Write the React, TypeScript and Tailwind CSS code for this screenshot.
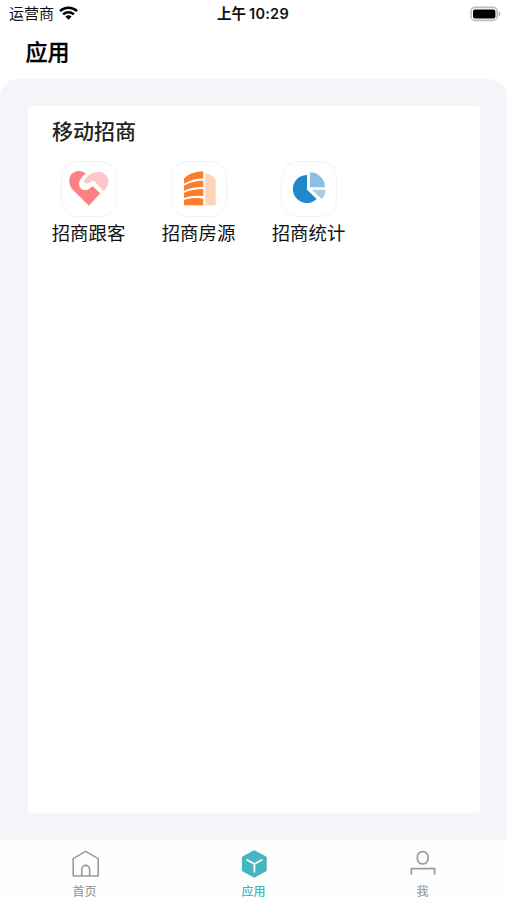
import React from 'react';

const FollowIcon = () => (
  <svg viewBox="63 153 168 168" className="size-14">
    <path d="M88 213C87 196 100 183 117 183C125 183 132 186 137 191C125 200 117 211 117 221C118 234 128 242 139 240C147 239 151 233 158 229L181 250L147 287L99 240C92 233 88 224 88 213Z" fill="#fb8184" />
    <path d="M132 214C139 199 151 189 169 186C189 183 206 197 205 216C205 227 199 236 191 244L163 213C155 211 150 218 143 220C136 222 130 219 132 214Z" fill="#fdc7ca" />
  </svg>
);

const HouseIcon = () => (
  <svg viewBox="63 33 168 168" className="size-14">
    <path d="M166 69C181 73 195 82 197 92V166H166Z" fill="#fed3b8" />
    <g fill="#fb7d2b">
      <path d="M102 101V86C114 73 136 64 160 64V85C138 86 119 91 102 101Z" />
      <path d="M102 122V107C118 97 139 92 160 92V111C139 111 120 114 102 122Z" />
      <path d="M102 144V128C120 120 140 117 160 117V138C140 136 121 138 102 144Z" />
      <path d="M102 166V150C121 144 141 143 160 146V166Z" />
    </g>
  </svg>
);

const StatsIcon = () => (
  <svg viewBox="63 33 168 168" className="size-14">
    <path d="M141 75V119L170 147A42 42 0 1 1 141 75Z" fill="#1e88ca" />
    <path d="M150 67A45 45 0 0 1 195 112H150Z" fill="#8cc0e3" />
    <path d="M155 119H197C197 130 192 140 185 147Z" fill="#a5d0ec" />
  </svg>
);

const HomeIcon = () => (
  <svg viewBox="0 0 28 28" className="size-7" fill="none" stroke="#9b9b9b" strokeWidth="1.6" strokeLinejoin="round">
    <path d="M2.2 8.6L14.7 1.4L27.2 8.6V26H2.2Z" />
    <path d="M10.8 26V19.3A3.9 3.9 0 0 1 18.6 19.3V26" />
  </svg>
);

const AppIcon = () => (
  <svg viewBox="0 0 28 28" className="size-7">
    <path d="M14.2 .7L26.2 7V20.8L14.2 27.2L2.4 20.8V7Z" fill="#45b6bf" stroke="#45b6bf" strokeLinejoin="round" />
    <path d="M7.2 10L14.4 14L21.6 10M14.4 14V21.8" fill="none" stroke="#fff" strokeWidth="1.8" strokeLinecap="round" />
  </svg>
);

const UserIcon = () => (
  <svg viewBox="0 0 28 28" className="size-7" fill="none" stroke="#9b9b9b" strokeWidth="1.7">
    <rect x="8.4" y="1.6" width="10.6" height="12.2" rx="5" />
    <path d="M2.3 24.8V18.6H25.6V24.8" strokeLinejoin="round" />
  </svg>
);

const entries = [
  { label: '招商跟客', icon: FollowIcon },
  { label: '招商房源', icon: HouseIcon },
  { label: '招商统计', icon: StatsIcon },
];

const tabs = [
  { label: '首页', icon: HomeIcon, active: false },
  { label: '应用', icon: AppIcon, active: true },
  { label: '我', icon: UserIcon, active: false },
];

const StatusBar = () => (
  <div className="h-7 grid grid-cols-3 items-center pl-[9px] pr-1.5 text-[#111]">
    <div className="flex items-center gap-[5px]">
      <span className="text-[15px] leading-7">运营商</span>
      <svg viewBox="0 0 19 14" className="w-[19px] h-3.5 mb-0.5" fill="none" stroke="#000" strokeWidth="2.6">
        <path d="M1 5.1C5.8.7 13.2.7 18 5.1" />
        <path d="M4.1 8.4C7.2 5.6 11.8 5.6 14.9 8.4" />
        <path d="M6.4 10.5C8.2 8.9 10.8 8.9 12.6 10.5L9.5 13.7Z" fill="#000" stroke="none" />
      </svg>
    </div>
    <div className="flex justify-center gap-[3px] -ml-1 text-[14.5px] leading-7 font-semibold whitespace-nowrap">
      <span>上午</span>
      <span className="tracking-[0.25px]">10:29</span>
    </div>
    <svg viewBox="0 0 31 16" className="w-[31px] h-4 mb-px justify-self-end">
      <rect x="1.1" y="1.4" width="26" height="13" rx="4" fill="#fff" stroke="#bdbdbd" strokeWidth="1.6" />
      <rect x="3" y="3.4" width="22.4" height="9.2" rx="2" fill="#000" />
      <path d="M28.6 5.6C30.8 6.2 30.8 9.8 28.6 10.4Z" fill="#aaa" />
    </svg>
  </div>
);

export default function App() {
  return (
    <div className="h-[900px] w-full flex flex-col bg-white font-['Inter','Noto_Sans_CJK_SC',sans-serif]">
      <StatusBar />
      <header className="h-[51px] pl-[25.5px] pb-[3px] flex items-center">
        <h1 className="text-[22px] leading-[48px] font-medium text-black [-webkit-text-stroke:0.3px_black]">应用</h1>
      </header>

      <main className="flex-1 min-h-0 bg-[#f3f5f9] rounded-t-[18px] pt-[27px] pb-[27px] pl-7 pr-[27px]">
        <section className="h-full bg-white rounded-sm px-1.5 pt-2.5">
          <h2 className="pl-[18px] text-[21px] leading-8 font-medium text-[#222]">移动招商</h2>
          <div className="flex mt-[13px]">
            {entries.map(({ label, icon: Icon }) => (
              <div key={label} className="w-[110px] flex flex-col items-center">
                <div className="size-14 rounded-[17px] bg-white inset-ring inset-ring-[#f3f3f3]">
                  <Icon />
                </div>
                <span className="mt-0.5 pr-px text-[18.4px] leading-7 text-[#111] whitespace-nowrap">{label}</span>
              </div>
            ))}
          </div>
        </section>
      </main>

      <nav className="h-[60px] bg-[#fdfefe] grid grid-cols-3 pt-2.5">
        {tabs.map(({ label, icon: Icon, active }) => (
          <div key={label} className="flex flex-col items-center">
            <Icon />
            <span className={`mt-1 text-xs leading-5 font-medium ${active ? 'text-[#45b6bf]' : 'text-[#a0a0a0]'}`}>{label}</span>
          </div>
        ))}
      </nav>
    </div>
  );
}
